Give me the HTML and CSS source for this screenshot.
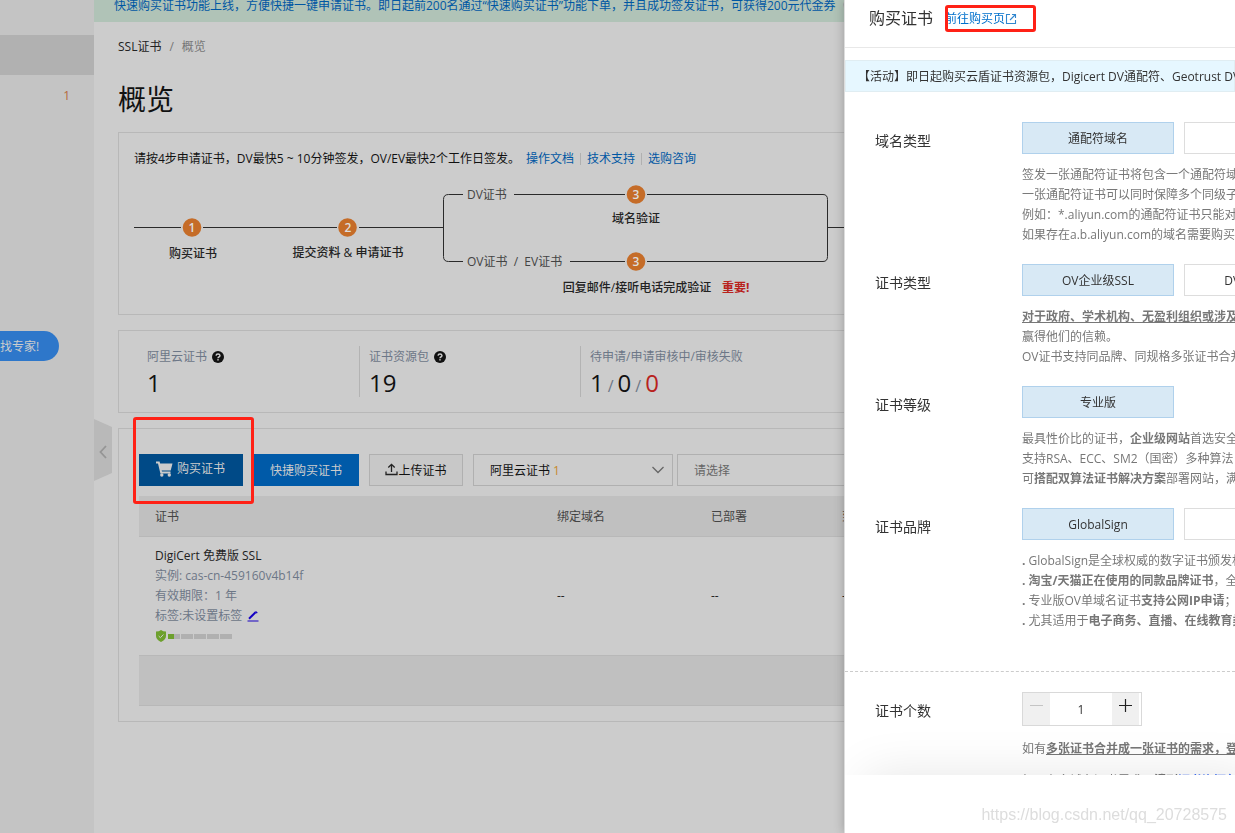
FILE: index.html
```html
<!DOCTYPE html>
<html lang="zh-CN">
<head>
<meta charset="utf-8">
<title>SSL证书 - 概览</title>
<link rel="stylesheet" href="styles.css">
</head>
<body>
<div class="app">
  <nav class="sidebar" aria-label="主导航">
    <div class="side-head"></div>
    <div class="side-item side-item-active"></div>
    <div class="side-item"><span class="side-count">1</span></div>
    <button class="expert" type="button">找专家!</button>
    <button class="collapse" type="button" aria-label="收起">
      <svg viewBox="0 0 18 62" width="18" height="62" aria-hidden="true"><path d="M0 0 18 8V54L0 62Z" fill="#b9b9b9"/><path d="M12 27 6.500 33 12 39" fill="none" stroke="#959595" stroke-width="1.800"/></svg>
    </button>
  </nav>

  <main class="main">
    <p class="banner">快速购买证书功能上线，方便快捷一键申请证书。即日起前200名通过“快速购买证书”功能下单，并且成功签发证书，可获得200元代金券（</p>
    <div class="content">
      <div class="crumbs"><a href="#">SSL证书</a><span class="slash">/</span><span>概览</span></div>
      <h1 class="title">概览</h1>

      <section class="panel guide">
        <p class="guide-text"><span>请按4步申请证书，DV最快5 ~ 10分钟签发，OV/EV最快2个工作日签发。</span><a href="#">操作文档</a><a href="#">技术支持</a><a href="#">选购咨询</a></p>
        <svg class="flow" viewBox="0 0 740 130" width="740" height="130" role="img" aria-label="证书申请流程">
          <g fill="none" stroke="#2a2a2a" stroke-width="1">
            <path d="M0 53.500H47M69 53.500H203M225 53.500H309.500"/>
            <path d="M329 20.500H314.500Q309.500 20.500 309.500 25.500V82.500Q309.500 87.500 314.500 87.500H329"/>
            <path d="M380 20.500H491M513 20.500H689Q693.500 20.500 693.500 25.500V82.500Q693.500 87.500 689 87.500H513M491 87.500H436M693.500 53.500H740"/>
          </g>
          <g fill="#c56c28"><circle cx="58" cy="53.500" r="9.300"/><circle cx="213.500" cy="53.500" r="9.300"/><circle cx="502" cy="20.500" r="9.300"/><circle cx="502" cy="87.500" r="9.300"/></g>
          <g class="flow-num"><text x="58" y="58">1</text><text x="214" y="58">2</text><text x="502" y="25">3</text><text x="502" y="92">3</text></g>
          <g class="flow-step"><text x="59" y="84">购买证书</text><text x="214" y="83">提交资料 &amp; 申请证书</text><text x="502" y="49">域名验证</text><text x="503" y="118">回复邮件/接听电话完成验证</text></g>
          <text class="flow-key" x="588" y="118">重要!</text>
          <g class="flow-path"><text x="333" y="25">DV证书</text><text x="333" y="92">OV证书&#160; /&#160; EV证书</text></g>
        </svg>
      </section>

      <section class="panel stats">
        <div class="stat">
          <div class="stat-name">阿里云证书 <svg viewBox="0 0 12 12" width="12" height="12" aria-hidden="true"><circle cx="6" cy="6" r="6" fill="#111"/><path d="M4 4.700Q4.200 3 6 3T8 4.600Q8 5.500 6.900 6 6 6.400 6 7.200" fill="none" stroke="#ccc" stroke-width="1.400"/><rect x="5.300" y="8.100" width="1.400" height="1.400" fill="#ccc"/></svg></div>
          <div class="stat-num">1</div>
        </div>
        <div class="stat">
          <div class="stat-name">证书资源包 <svg viewBox="0 0 12 12" width="12" height="12" aria-hidden="true"><circle cx="6" cy="6" r="6" fill="#111"/><path d="M4 4.700Q4.200 3 6 3T8 4.600Q8 5.500 6.900 6 6 6.400 6 7.200" fill="none" stroke="#ccc" stroke-width="1.400"/><rect x="5.300" y="8.100" width="1.400" height="1.400" fill="#ccc"/></svg></div>
          <div class="stat-num">19</div>
        </div>
        <div class="stat">
          <div class="stat-name">待申请/申请审核中/审核失败</div>
          <div class="stat-num">1<span class="stat-sep">/</span>0<span class="stat-sep">/</span><span class="stat-bad">0</span></div>
        </div>
      </section>

      <section class="panel certs">
        <div class="toolbar">
          <div class="marked">
            <button class="btn btn-buy" type="button">
              <svg viewBox="0 0 18 16" width="18" height="16" aria-hidden="true"><path d="M1 1.500H3.800L6.200 11.500H15.500" fill="none" stroke="#ccc" stroke-width="2"/><path d="M4 2.500H17.500L15.700 9.500H5.500Z" fill="#ccc"/><circle cx="6.800" cy="14" r="1.700" fill="#ccc"/><circle cx="14.300" cy="14" r="1.700" fill="#ccc"/></svg>
              <span>购买证书</span>
            </button>
          </div>
          <button class="btn btn-quick" type="button">快捷购买证书</button>
          <button class="btn btn-upload" type="button">
            <svg viewBox="0 0 13 13" width="13" height="13" aria-hidden="true"><path d="M6.500 9V1.500M3.300 4.500 6.500 1.300 9.700 4.500M1 8.500V11.500H12V8.500" fill="none" stroke="#222" stroke-width="1.300"/></svg>上传证书</button>
          <div class="picker picker-source">
            <select aria-label="证书来源"><option>阿里云证书</option></select>
            <span class="picker-count">1</span>
            <svg class="picker-arrow" viewBox="0 0 14 8" width="14" height="8" aria-hidden="true"><path d="M1.500 1 7 6.500 12.500 1" fill="none" stroke="#666" stroke-width="1.300"/></svg>
          </div>
          <div class="picker picker-state">
            <select aria-label="证书状态"><option>请选择</option></select>
          </div>
        </div>

        <table class="table">
          <colgroup><col class="col-cert"><col class="col-domain"><col class="col-deploy"><col></colgroup>
          <thead><tr><th>证书</th><th>绑定域名</th><th>已部署</th><th>到期时间</th></tr></thead>
          <tbody><tr>
            <td>
              <div class="cert-name">DigiCert 免费版 SSL</div>
              <div>实例: cas-cn-459160v4b14f</div>
              <div>有效期限：1 年</div>
              <div class="cert-tag">标签:未设置标签 <svg viewBox="0 0 12 12" width="12" height="12" aria-hidden="true"><path d="M.500 11H11.500" stroke="#3722c4" stroke-width="1.200"/><path d="M2 8.800 8.600 2.200" stroke="#1400c4" stroke-width="2"/><path d="M9 .900 10.800 2.700 9.700 3.600 8 1.900Z" fill="#1400c4"/></svg></div>
              <div class="level" role="img" aria-label="安全等级">
                <svg viewBox="0 0 12 12" width="12" height="12" aria-hidden="true"><path d="M6 0Q8 1.600 11 1.600V6Q11 9.500 6 12 1 9.500 1 6V1.600Q4 1.600 6 0Z" fill="#6da02d"/><path d="M3.700 6 5.400 7.700 8.400 4.500" fill="none" stroke="#ccc" stroke-width="1"/></svg>
                <i class="bar bar-half"></i><i class="bar"></i><i class="bar"></i><i class="bar"></i><i class="bar"></i>
              </div>
            </td>
            <td class="cell-dash">--</td><td class="cell-dash">--</td><td class="cell-dash">--</td>
          </tr></tbody>
        </table>
        <div class="table-foot"></div>
      </section>
    </div>
  </main>
</div>

<aside class="drawer" aria-label="购买证书">
  <header class="drawer-head">
    <h2>购买证书</h2>
    <div class="jump"><a href="#">前往购买页<svg viewBox="0 0 12 12" width="12" height="12" aria-hidden="true"><path d="M5 1.500H1.500V10.500H10.500V7M7 1.500H10.500V5M10.500 1.500 5 7" fill="none" stroke="#3187cf" stroke-width="1.100"/></svg></a></div>
  </header>
  <p class="notice">【活动】即日起购买云盾证书资源包，Digicert DV通配符、Geotrust DV通</p>

  <div class="drawer-body">
    <div class="field">
      <div class="field-name">域名类型</div>
      <div class="field-value">
        <div class="options"><button class="option option-on" type="button">通配符域名</button><button class="option" type="button">单域名</button></div>
        <p>签发一张通配符证书将包含一个通配符域名</p>
        <p>一张通配符证书可以同时保障多个同级子域</p>
        <p>例如：*.aliyun.com的通配符证书只能对a.</p>
        <p>如果存在a.b.aliyun.com的域名需要购买*.b</p>
      </div>
    </div>
    <div class="field">
      <div class="field-name">证书类型</div>
      <div class="field-value">
        <div class="options"><button class="option option-on" type="button">OV企业级SSL</button><button class="option" type="button">DV域名级SSL</button></div>
        <p><b><u>对于政府、学术机构、无盈利组织或涉及信</u></b></p>
        <p>赢得他们的信赖。</p>
        <p>OV证书支持同品牌、同规格多张证书合并</p>
      </div>
    </div>
    <div class="field">
      <div class="field-name">证书等级</div>
      <div class="field-value">
        <div class="options"><button class="option option-on" type="button">专业版</button></div>
        <p>最具性价比的证书，<b>企业级网站</b>首选安全</p>
        <p>支持RSA、ECC、SM2（国密）多种算法；</p>
        <p>可<b>搭配双算法证书解决方案</b>部署网站，满足</p>
      </div>
    </div>
    <div class="field">
      <div class="field-name">证书品牌</div>
      <div class="field-value">
        <div class="options"><button class="option option-on" type="button">GlobalSign</button><button class="option" type="button">DigiCert</button></div>
        <p><b>.</b> GlobalSign是全球权威的数字证书颁发机</p>
        <p><b>. 淘宝/天猫正在使用的同款品牌证书</b>，全球</p>
        <p><b>.</b> 专业版OV单域名证书<b>支持公网IP申请</b>；</p>
        <p><b>.</b> 尤其适用于<b>电子商务、直播、在线教育类</b></p>
      </div>
    </div>
    <div class="field field-count">
      <label class="field-name" for="count">证书个数</label>
      <div class="field-value">
        <div class="stepper">
          <button type="button" aria-label="减少" disabled><svg viewBox="0 0 13 13" width="13" height="13" aria-hidden="true"><path d="M0 6.500H13" stroke="#c4c4c4"/></svg></button>
          <input id="count" type="text" value="1">
          <button type="button" aria-label="增加"><svg viewBox="0 0 13 13" width="13" height="13" aria-hidden="true"><path d="M0 6.500H13M6.500 0V13" stroke="#222" stroke-width="1.200"/></svg></button>
        </div>
        <p>如有<b><u>多张证书合并成一张证书的需求，登录</u></b></p>
        <p class="more">如果有多域名证书需求，<b>请到<a href="#">证书资源包</a></b></p>
      </div>
    </div>
  </div>
  <footer class="drawer-foot"><span class="watermark">https://blog.csdn.net/qq_20728575</span></footer>
</aside>
</body>
</html>
```
FILE: styles.css
```css
* { box-sizing: border-box; }
body {
  margin: 0;
  overflow: hidden;
  background: #ccc;
  color: #111;
  font: 12px/20px "Open Sans", "Noto Sans CJK SC", sans-serif;
}
h1, h2, p { margin: 0; font-weight: 400; }
a { color: #0057a3; text-decoration: none; }
button, input, select { font: inherit; color: inherit; }
button { padding: 0; border: 0; background: none; }

.app { display: flex; min-height: 100vh; }

/* sidebar */
.sidebar { position: relative; flex: none; width: 94px; background: #c4c4c4; }
.side-head { height: 35px; }
.side-item { height: 40px; padding: 11px 24px 9px; text-align: right; }
.side-item-active { background: #b1b1b1; }
.side-count { color: #b4693c; }
.expert {
  position: absolute;
  top: 331px;
  left: 0;
  width: 59px;
  height: 30px;
  padding-top: 2px;
  border-radius: 0 15px 15px 0;
  background: #2e77ca;
  color: #ccc;
  text-align: left;
}
.collapse { position: absolute; top: 419px; left: 100%; height: 62px; }

/* main column */
.main { flex: 1; min-width: 0; }
.banner {
  height: 22px;
  padding-left: 20px;
  overflow: hidden;
  background: #b0c3b7;
  color: #0057a3;
  line-height: 12px;
  white-space: nowrap;
}
.content { padding: 15px 24px; }
.crumbs { display: flex; color: #777; }
.crumbs a { color: #222; }
.slash { padding: 0 8px; }
.title { margin: 22px 0 13px; font-size: 28px; line-height: 40px; }
.panel { margin-bottom: 15px; border: 1px solid #b8b8b8; }

.guide { height: 183px; padding: 16px 15px; overflow: hidden; }
.guide-text { display: flex; align-items: center; white-space: nowrap; }
.guide-text a { padding: 0 6px; line-height: 12px; }
.guide-text a + a { border-left: 1px solid #b0b0b0; }
.flow { display: block; margin-top: 5px; margin-bottom: 0; font-size: 12px; }
.flow-num { fill: #ddd; font-weight: 600; text-anchor: middle; }
.flow-step { fill: #222; font-weight: 500; text-anchor: middle; }
.flow-key { fill: #b8221d; font-weight: 700; }
.flow-path { fill: #444; }

.stats { display: flex; padding: 15px 0; }
.stat { flex: none; width: 221px; height: 51px; padding: 1px 0 0 9px; border-left: 1px solid #b3b3b3; }
.stat:first-child { width: 240px; padding-left: 28px; border-left: 0; }
.stat-name { color: #6c7787; white-space: nowrap; }
.stat-name svg { margin-left: 2px; vertical-align: -2px; }
.stat-num { font-size: 24px; line-height: 32px; }
.stat-sep { margin: 0 4px; color: #6c7787; font-size: 16px; }
.stat-bad { color: #b8221d; }

.certs { padding: 25px 20px 15px; }
.toolbar { display: flex; margin-bottom: 10px; }
.marked { position: relative; margin-right: 10px; }
.marked::after {
  content: "";
  position: absolute;
  inset: -37px -11px -18px -6px;
  border: 3px solid #ff2116;
  border-radius: 3px;
  pointer-events: none;
}
.btn { display: flex; align-items: center; justify-content: center; height: 32px; padding-top: 2px; white-space: nowrap; }
.btn-buy { gap: 4px; width: 104px; padding: 0 2px 2px 0; background: #004a87; color: #ccc; }
.btn-quick { width: 106px; background: #005aa8; color: #ccc; }
.btn-upload { width: 94px; margin: 0 10px; border: 1px solid #b0b0b0; background: #c8c8c8; }
.btn-upload svg { margin-bottom: 4px; }
.picker { position: relative; height: 32px; margin-right: 4px; }
.picker select {
  width: 100%;
  height: 100%;
  padding: 2px 16px 0;
  border: 1px solid #b0b0b0;
  border-radius: 0;
  background: transparent;
  appearance: none;
}
.picker-source { width: 200px; }
.picker-state { flex: 1; margin-right: 0; color: #666; }
.picker-count { position: absolute; top: 7px; left: 80px; color: #c6892c; }
.picker-arrow { position: absolute; top: 12px; right: 8px; }

.table { width: 100%; border-collapse: collapse; table-layout: fixed; }
.col-cert { width: 402px; }
.col-domain { width: 154px; }
.col-deploy { width: 131px; }
.table th { padding: 11px 16px 9px; background: #c0c0c0; color: #444; font-weight: 400; text-align: left; }
.table td { padding: 9px 16px; border: solid #b8b8b8; border-width: 1px 0; color: #6c7787; }
.table .cert-name, .table .cell-dash { color: #222; }
.cert-tag svg { margin-left: 2px; vertical-align: -2px; }
.level { display: flex; align-items: center; gap: 1px; height: 20px; }
.bar { width: 12px; height: 5px; background: #b0b0b0; }
.bar-half { background: linear-gradient(90deg, #6da02d 50%, #b0b0b0 50%); }
.table-foot { height: 50px; border-bottom: 1px solid #b8b8b8; background: #c0c0c0; }

/* purchase drawer */
.drawer {
  position: fixed;
  inset: 0 0 0 auto;
  display: flex;
  flex-direction: column;
  width: 391px;
  overflow: hidden;
  border-left: 1px solid #ddd;
  background: #fff;
  box-shadow: 0 0 10px rgba(0, 0, 0, .25);
  color: #333;
  white-space: nowrap;
}
.drawer a { color: #0070cc; }
.drawer-head { display: flex; flex: none; align-items: center; height: 48px; padding: 0 24px 12px; border-bottom: 1px solid #e8e8e8; }
.drawer-head h2 { margin-right: 12px; font-size: 16px; line-height: 24px; }
.jump { position: relative; padding-top: 2px; }
.jump::after {
  content: "";
  position: absolute;
  inset: -2px -19px -3px 0;
  border: 3px solid #ff2116;
  border-radius: 3px;
  pointer-events: none;
}
.jump svg { vertical-align: -2px; }
.notice { flex: none; margin: 12px 0 30px; padding: 6px 12px 4px; border: 1px solid #e0edf2; background: #e6f7ff; }
.drawer-body { flex: 1; min-height: 0; overflow: hidden; }
.field { display: flex; padding: 0 0 19px 30px; }
.field-name { flex: none; width: 147px; font-size: 14px; line-height: 38px; }
.field-value { color: #777; }
.options { display: flex; gap: 10px; margin-bottom: 11px; color: #333; }
.option { flex: none; width: 152px; height: 32px; padding-top: 2px; border: 1px solid #ddd; background: #fff; }
.option-on { border-color: #b0d1ec; background: #d8e9f5; }
.field-count { margin-top: 21px; padding-top: 20px; border-top: 1px dashed #ccc; }
.stepper { display: flex; width: 120px; height: 34px; margin-bottom: 13px; border: 1px solid #d9d9d9; color: #333; }
.stepper button { flex: none; width: 27px; padding-bottom: 2px; background: #f0f0f0; }
.stepper input { width: 62px; padding: 2px 0 0; border: 0; background: none; text-align: center; }
.more { margin-top: 12px; }
.more a { color: #3f6ff5; }
.drawer-foot {
  position: relative;
  display: flex;
  flex: none;
  align-items: center;
  justify-content: flex-end;
  height: 58px;
  padding: 22px 8px 0;
  background: #fff;
  box-shadow: 20px 0 50px rgba(0, 0, 0, .1);
}
.watermark { color: #ddd; font: 16px/20px "Liberation Sans", sans-serif; }
```
